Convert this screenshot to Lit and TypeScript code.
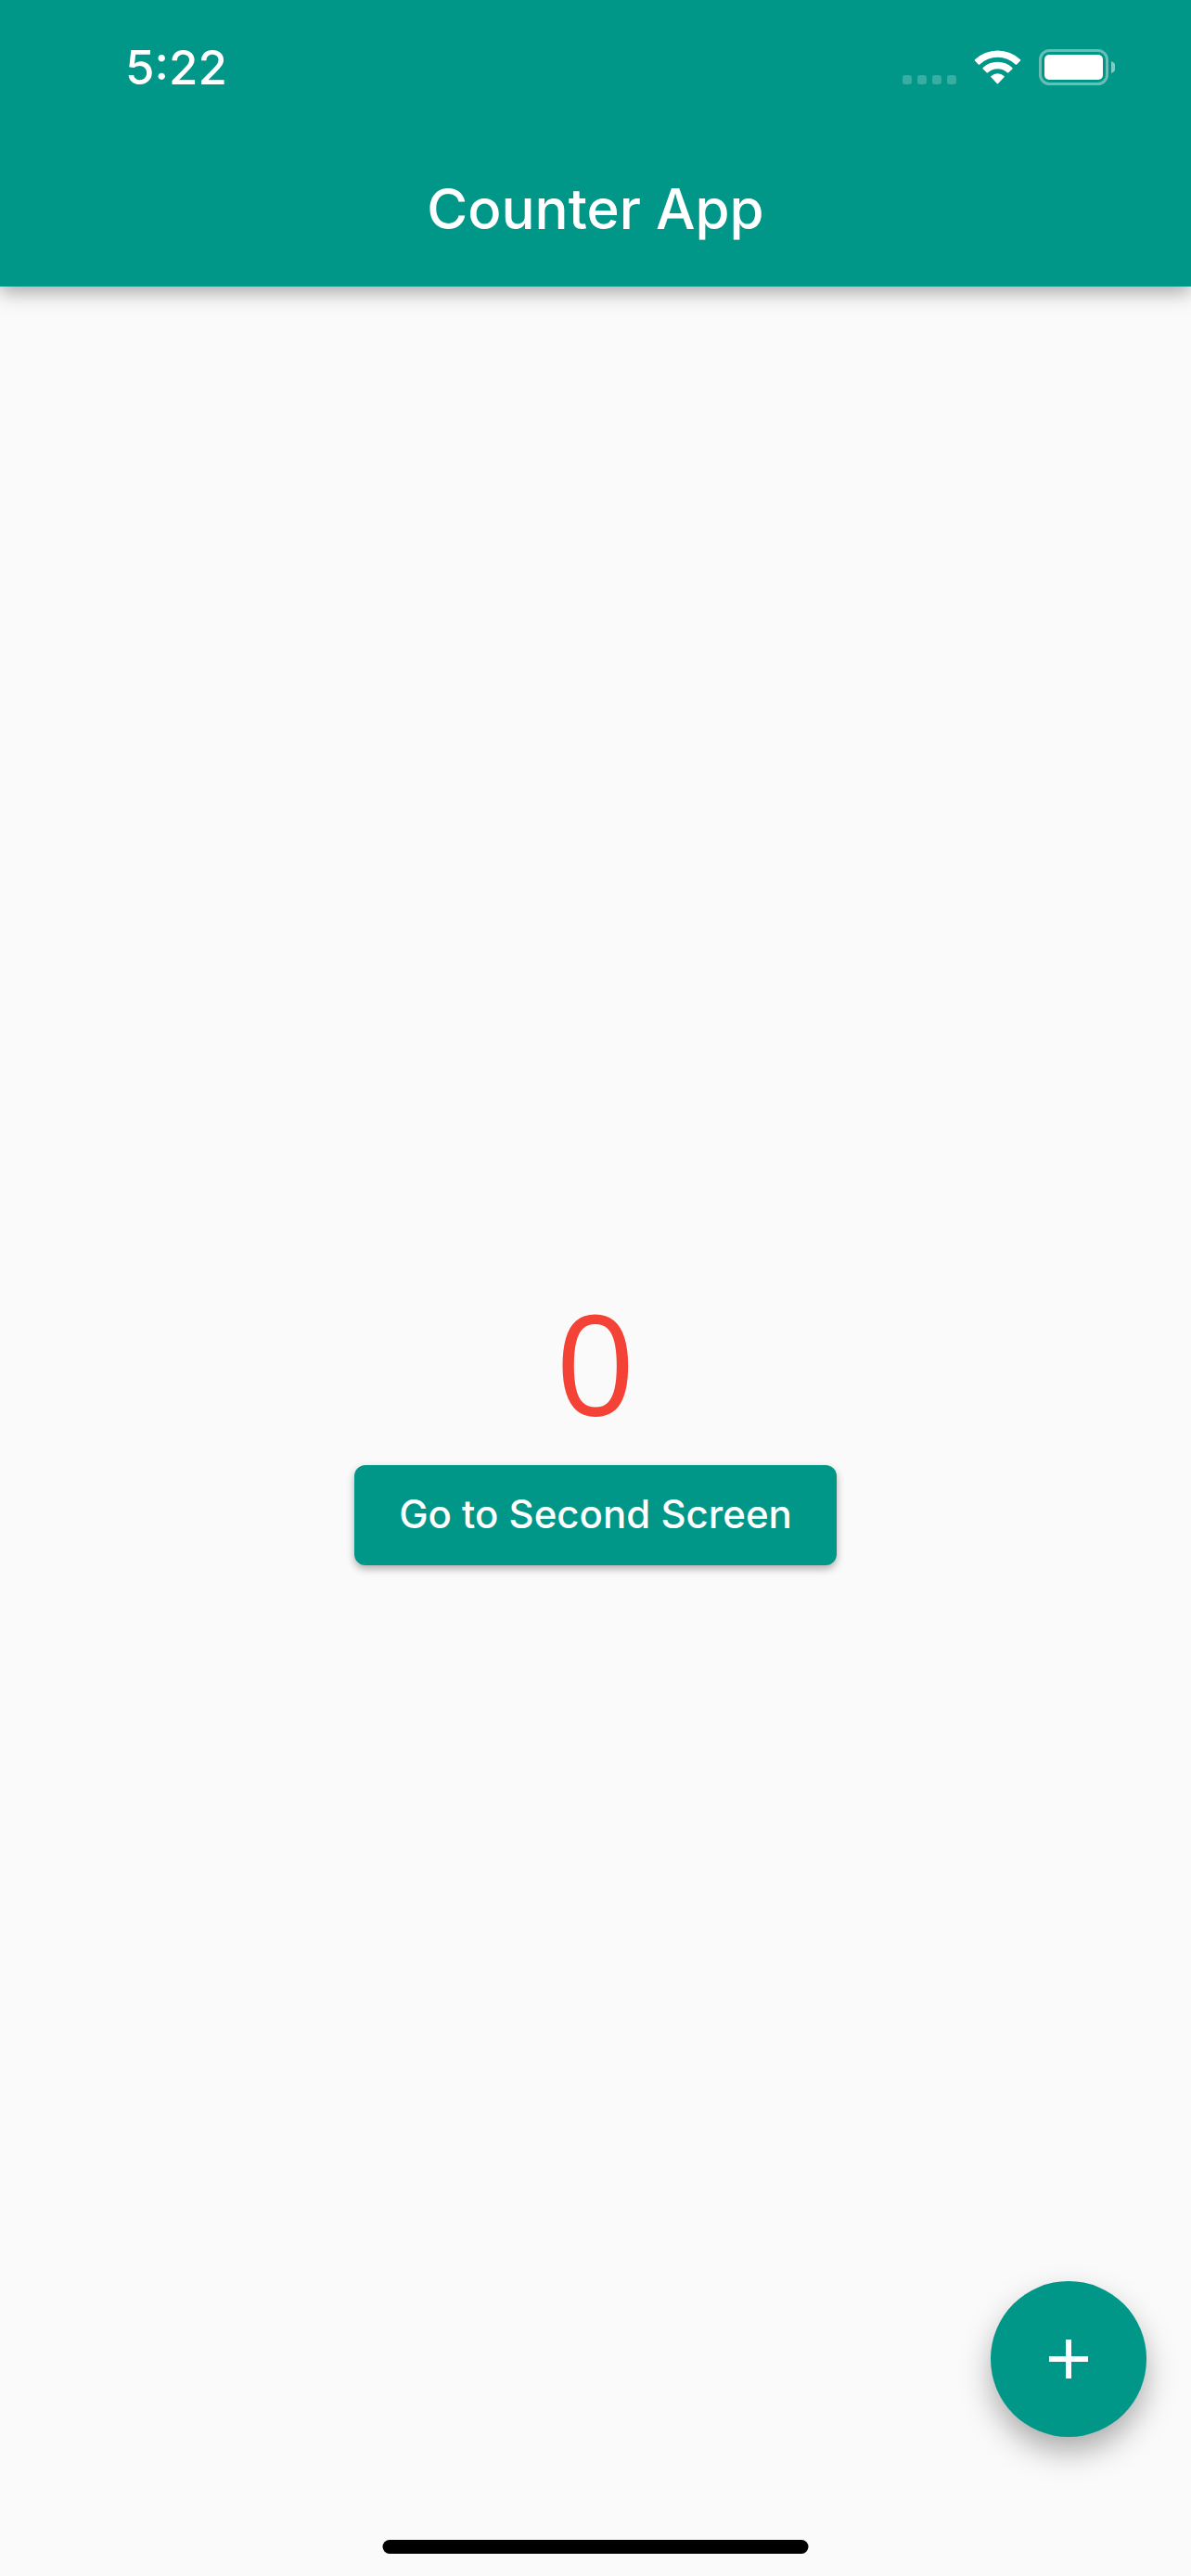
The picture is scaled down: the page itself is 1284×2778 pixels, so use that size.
import { LitElement, html, css, svg } from "lit";
import { customElement, state } from "lit/decorators.js";

@customElement("status-bar")
class StatusBar extends LitElement {
  static styles = css`
    :host {
      display: flex;
      align-items: center;
      justify-content: space-between;
      box-sizing: border-box;
      height: 141px;
      padding: 4px 82px 0 135px;
      color: #fff;
    }
    .time {
      font-size: 51px;
      line-height: 60px;
      font-weight: 500;
    }
    .indicators {
      display: flex;
      align-items: center;
      gap: 19px;
    }
    svg {
      display: block;
    }
  `;

  render() {
    return html`
      <time class="time">5:22</time>
      <div class="indicators">
        <svg width="58" height="39" viewBox="0 0 58 39" fill="#fff" fill-opacity="0.22" aria-hidden="true">
          ${[0, 16, 32, 48].map((x) => svg`<rect x=${x} y="28" width="10" height="10" rx="3" />`)}
        </svg>
        <svg width="51" height="39" viewBox="0 0 51 39" fill="#fff" aria-hidden="true">
          <path d="M1 11.2 A35.5 35.5 0 0 1 50 11.2 Q50.7 11.9 50 12.6 L46.2 16.4 Q45.5 17 44.8 16.4 A28 28 0 0 0 6.2 16.4 Q5.5 17 4.8 16.4 L1 12.6 Q0.3 11.9 1 11.2 Z" />
          <path d="M9.7 20 A23 23 0 0 1 41.3 20 Q42 20.7 41.3 21.4 L37.3 25.2 Q36.6 25.8 35.9 25.2 A15.5 15.5 0 0 0 15.1 25.2 Q14.4 25.8 13.7 25.2 L9.7 21.4 Q9 20.7 9.7 20 Z" />
          <path d="M18.5 28.9 A10.6 10.6 0 0 1 32.5 28.9 Q33.2 29.6 32.5 30.3 L26.2 37 Q25.5 37.7 24.8 37 L18.5 30.3 Q17.8 29.6 18.5 28.9 Z" />
        </svg>
        <svg width="82" height="39" viewBox="0 0 82 39" aria-hidden="true">
          <rect x="1.5" y="1.5" width="72" height="36" rx="10" fill="none" stroke="#fff" stroke-opacity="0.4" stroke-width="3" />
          <rect x="6" y="6" width="63" height="27" rx="5" fill="#fff" />
          <path d="M78 13 A6.8 6.8 0 0 1 78 26 Z" fill="#fff" fill-opacity="0.5" />
        </svg>
      </div>
    `;
  }
}

@customElement("app-root")
class AppRoot extends LitElement {
  static styles = css`
    :host {
      display: flex;
      flex-direction: column;
      position: relative;
      min-height: 100vh;
      background: #fafafa;
      font-family: Inter, Roboto, sans-serif;
    }
    .header {
      background: #009688;
      color: #fff;
      box-shadow: 0 6px 20px rgba(0, 0, 0, 0.34);
    }
    .title {
      margin: 0;
      font-size: 60px;
      line-height: 168px;
      font-weight: 500;
      text-align: center;
    }
    .content {
      flex: 1;
      display: flex;
      flex-direction: column;
      align-items: center;
      justify-content: center;
    }
    .count {
      font-family: "Open Sans", "Noto Sans", sans-serif;
      font-size: 150px;
      line-height: 174px;
      color: #f44336;
    }
    button {
      border: 0;
      font-family: inherit;
      background: #009688;
      color: #fff;
      cursor: pointer;
    }
    .next {
      height: 108px;
      margin: 24px 0 18px;
      padding: 0 48px 2px;
      border-radius: 12px;
      font-size: 42px;
      font-weight: 500;
      box-shadow: 0 4px 9px rgba(0, 0, 0, 0.3);
    }
    .add {
      position: absolute;
      right: 48px;
      bottom: 150px;
      display: grid;
      place-items: center;
      width: 168px;
      height: 168px;
      padding: 0;
      border-radius: 50%;
      box-shadow: 0 16px 34px -2px rgba(0, 0, 0, 0.34);
    }
    .home {
      position: absolute;
      left: 50%;
      bottom: 24px;
      width: 459px;
      height: 15px;
      border-radius: 8px;
      background: #000;
      transform: translateX(-50%);
    }
  `;

  @state() private count = 0;

  render() {
    return html`
      <header class="header">
        <status-bar></status-bar>
        <h1 class="title">Counter App</h1>
      </header>
      <main class="content">
        <output class="count">${this.count}</output>
        <button class="next" type="button">Go to Second Screen</button>
      </main>
      <button class="add" type="button" aria-label="Increment" @click=${() => this.count++}>
        <svg width="72" height="72" viewBox="0 0 24 24" fill="#fff" aria-hidden="true">
          <path d="M19 13h-6v6h-2v-6H5v-2h6V5h2v6h6z" />
        </svg>
      </button>
      <div class="home"></div>
    `;
  }
}
